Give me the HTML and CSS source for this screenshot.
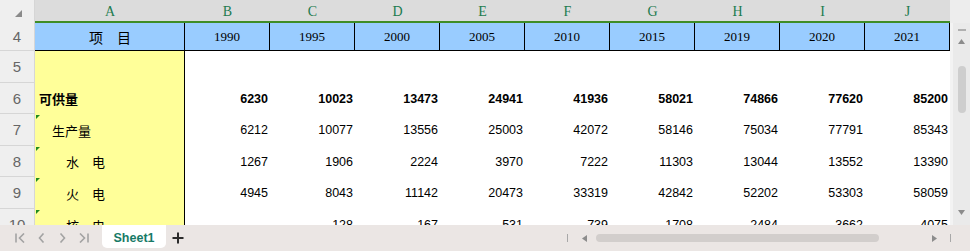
FILE: index.html
```html
<!DOCTYPE html>
<html lang="zh">
<head>
  <meta charset="UTF-8" />
  <title>Sheet1</title>
  <link rel="stylesheet" href="styles.css">
</head>
<body>

<div class="app">
  <div class="main">
    <div class="sheet">
      <!-- column headers -->
      <div class="corner">
        <svg width="7" height="7" viewBox="0 0 7 7"><polygon points="7,0 7,7 0,7" fill="#8a8a8a"/></svg>
      </div>
      <div class="col-head">A</div>
      <div class="col-head">B</div>
      <div class="col-head">C</div>
      <div class="col-head">D</div>
      <div class="col-head">E</div>
      <div class="col-head">F</div>
      <div class="col-head">G</div>
      <div class="col-head">H</div>
      <div class="col-head">I</div>
      <div class="col-head">J</div>

      <!-- row 4 -->
      <div class="row-head">4</div>
      <div class="cell title">项　目</div>
      <div class="cell year">1990</div>
      <div class="cell year">1995</div>
      <div class="cell year">2000</div>
      <div class="cell year">2005</div>
      <div class="cell year">2010</div>
      <div class="cell year">2015</div>
      <div class="cell year">2019</div>
      <div class="cell year">2020</div>
      <div class="cell year">2021</div>

      <!-- row 5 -->
      <div class="row-head">5</div>
      <div class="cell item"></div>
      <div class="cell num"></div>
      <div class="cell num"></div>
      <div class="cell num"></div>
      <div class="cell num"></div>
      <div class="cell num"></div>
      <div class="cell num"></div>
      <div class="cell num"></div>
      <div class="cell num"></div>
      <div class="cell num"></div>

      <!-- row 6 -->
      <div class="row-head">6</div>
      <div class="cell item bold">可供量</div>
      <div class="cell num bold">6230</div>
      <div class="cell num bold">10023</div>
      <div class="cell num bold">13473</div>
      <div class="cell num bold">24941</div>
      <div class="cell num bold">41936</div>
      <div class="cell num bold">58021</div>
      <div class="cell num bold">74866</div>
      <div class="cell num bold">77620</div>
      <div class="cell num bold">85200</div>

      <!-- row 7 -->
      <div class="row-head">7</div>
      <div class="cell item indent1 flag">生产量</div>
      <div class="cell num">6212</div>
      <div class="cell num">10077</div>
      <div class="cell num">13556</div>
      <div class="cell num">25003</div>
      <div class="cell num">42072</div>
      <div class="cell num">58146</div>
      <div class="cell num">75034</div>
      <div class="cell num">77791</div>
      <div class="cell num">85343</div>

      <!-- row 8 -->
      <div class="row-head">8</div>
      <div class="cell item indent2 flag">水　电</div>
      <div class="cell num">1267</div>
      <div class="cell num">1906</div>
      <div class="cell num">2224</div>
      <div class="cell num">3970</div>
      <div class="cell num">7222</div>
      <div class="cell num">11303</div>
      <div class="cell num">13044</div>
      <div class="cell num">13552</div>
      <div class="cell num">13390</div>

      <!-- row 9 -->
      <div class="row-head">9</div>
      <div class="cell item indent2 flag">火　电</div>
      <div class="cell num">4945</div>
      <div class="cell num">8043</div>
      <div class="cell num">11142</div>
      <div class="cell num">20473</div>
      <div class="cell num">33319</div>
      <div class="cell num">42842</div>
      <div class="cell num">52202</div>
      <div class="cell num">53303</div>
      <div class="cell num">58059</div>

      <!-- row 10 (cut off by the tab bar) -->
      <div class="row-head">10</div>
      <div class="cell item indent2 flag">核　电</div>
      <div class="cell num"></div>
      <div class="cell num">128</div>
      <div class="cell num">167</div>
      <div class="cell num">531</div>
      <div class="cell num">739</div>
      <div class="cell num">1708</div>
      <div class="cell num">2484</div>
      <div class="cell num">3662</div>
      <div class="cell num">4075</div>
    </div>

    <div class="vscroll">
      <div class="vs-top"></div>
      <div class="vs-dash"></div>
      <svg class="vs-up" width="7" height="5" viewBox="0 0 7 5"><polygon points="3.5,0 7,5 0,5" fill="#8c8c8c"/></svg>
      <div class="vs-thumb"></div>
      <svg class="vs-down" width="7" height="5" viewBox="0 0 7 5"><polygon points="0,0 7,0 3.5,5" fill="#8c8c8c"/></svg>
    </div>
  </div>

  <div class="tabbar">
    <div class="nav">
      <span class="nav-btn">
        <svg width="11" height="10" viewBox="0 0 11 10"><path d="M1 0.5V9.5M9 0.5L4.5 5L9 9.5" fill="none" stroke="#a3a3a3" stroke-width="1.6"/></svg>
      </span>
      <span class="nav-btn">
        <svg width="7" height="10" viewBox="0 0 7 10"><path d="M5.5 0.5L1.5 5L5.5 9.5" fill="none" stroke="#a3a3a3" stroke-width="1.6"/></svg>
      </span>
      <span class="nav-btn">
        <svg width="7" height="10" viewBox="0 0 7 10"><path d="M1.5 0.5L5.5 5L1.5 9.5" fill="none" stroke="#a3a3a3" stroke-width="1.6"/></svg>
      </span>
      <span class="nav-btn">
        <svg width="11" height="10" viewBox="0 0 11 10"><path d="M10 0.5V9.5M2 0.5L6.5 5L2 9.5" fill="none" stroke="#a3a3a3" stroke-width="1.6"/></svg>
      </span>
    </div>
    <div class="tab">Sheet1</div>
    <span class="add">
      <svg width="12" height="12" viewBox="0 0 12 12"><path d="M6 0.5V11.5M0.5 6H11.5" fill="none" stroke="#2b2b2b" stroke-width="2"/></svg>
    </span>
    <div class="hscroll">
      <span class="hs-bar"></span>
      <svg class="hs-left" width="5" height="7" viewBox="0 0 5 7"><polygon points="0,3.5 5,0 5,7" fill="#8c8c8c"/></svg>
      <span class="hs-thumb"></span>
      <svg class="hs-right" width="5" height="7" viewBox="0 0 5 7"><polygon points="5,3.5 0,0 0,7" fill="#8c8c8c"/></svg>
      <span class="hs-bar"></span>
    </div>
  </div>
</div>

</body>
</html>
```

FILE: styles.css
```css
body {
  margin: 0;
  font-family: "Liberation Sans", Arial, "Noto Sans CJK SC", sans-serif;
  background: #fff;
  color: #000;
}
.app {
  width: 970px;
  height: 251px;
  display: flex;
  flex-direction: column;
  overflow: hidden;
}
.main {
  display: flex;
  height: 225px;
}

/* grid */
.sheet {
  width: 950px;
  display: grid;
  grid-template-columns: 35px 150px repeat(9, 85px);
  grid-template-rows: 23px 28px 32px 31px 32px 31px 32px 32px;
  overflow: hidden;
}
.sheet > div {
  box-sizing: border-box;
}
.corner {
  background: #efefef;
  border-right: 1px solid #d6d6d6;
  display: flex;
  align-items: center;
  justify-content: center;
  padding: 3px 0 0 2px;
}
.col-head {
  background: #dcdcdc;
  border-bottom: 2px solid #3f8d26;
  color: #1d7b4f;
  font-family: "Liberation Serif", serif;
  font-size: 14px;
  display: flex;
  align-items: center;
  justify-content: center;
  padding-top: 3px;
}
.row-head {
  background: #efefef;
  border-right: 1px solid #d6d6d6;
  border-bottom: 1px solid #d6d6d6;
  color: #666;
  font-size: 15px;
  display: flex;
  align-items: center;
  justify-content: center;
}
.cell {
  display: flex;
  align-items: center;
  font-size: 12.5px;
  position: relative;
  white-space: nowrap;
}
.title {
  background: #99ccff;
  border-right: 1px solid #000;
  border-bottom: 1px solid #000;
  justify-content: center;
  font-family: "Noto Sans CJK SC", sans-serif;
  font-size: 14px;
  padding-left: 1px;
}
.year {
  background: #99ccff;
  border-right: 1px solid #000;
  border-bottom: 1px solid #000;
  justify-content: center;
  font-family: "Liberation Serif", serif;
  font-size: 13px;
}
.item {
  background: #ffff99;
  border-right: 1px solid #000;
  padding-left: 4px;
  font-family: "Liberation Sans", "Noto Sans CJK SC", sans-serif;
  font-size: 13px;
}
.indent1 { padding-left: 17px; }
.indent2 { padding-left: 31px; }
.num {
  justify-content: flex-end;
  padding-right: 2px;
}
.bold { font-weight: bold; }

/* little green corner marker */
.flag::before {
  content: "";
  position: absolute;
  left: 1px;
  top: 1px;
  border-top: 4px solid #1f8a1f;
  border-right: 4px solid transparent;
}

/* vertical scrollbar */
.vscroll {
  width: 20px;
  box-sizing: border-box;
  background: #eaeaea;
  border-left: 3px solid #f3f3f3;
  display: flex;
  flex-direction: column;
  align-items: center;
}
.vs-top {
  align-self: stretch;
  height: 23px;
  background: #ededed;
  margin-left: -3px;
}
.vs-dash {
  width: 8px;
  height: 2px;
  margin-top: 6px;
  background: #b0b0b0;
}
.vs-up {
  margin-top: 8px;
}
.vs-thumb {
  width: 8px;
  height: 47px;
  margin-top: 22px;
  border-radius: 4px;
  background: #cecece;
}
.vs-down {
  margin-top: auto;
  margin-bottom: 10px;
}

/* sheet tabs */
.tabbar {
  height: 26px;
  background: #ebe6e4;
  display: flex;
  align-items: flex-start;
}
.nav {
  display: flex;
  padding-left: 10px;
  height: 26px;
}
.nav-btn {
  width: 21px;
  display: flex;
  align-items: center;
  justify-content: center;
}
.tab {
  margin-left: 8px;
  width: 64px;
  height: 23px;
  background: #fff;
  border-radius: 0 0 5px 5px;
  color: #177a66;
  font-weight: bold;
  font-size: 12.5px;
  display: flex;
  align-items: center;
  justify-content: center;
  padding-top: 2px;
  box-sizing: border-box;
}
.add {
  width: 24px;
  height: 26px;
  display: flex;
  align-items: center;
  justify-content: center;
}
.hscroll {
  margin-left: auto;
  margin-right: 19px;
  width: 384px;
  height: 26px;
  display: flex;
  align-items: center;
}
.hs-bar {
  width: 1px;
  height: 8px;
  background: #a8a8a8;
}
.hs-left {
  margin-left: 14px;
}
.hs-thumb {
  width: 283px;
  height: 8px;
  margin-left: 9px;
  border-radius: 4px;
  background: #d2cecc;
}
.hs-right {
  margin-left: auto;
  margin-right: 13px;
}
```
